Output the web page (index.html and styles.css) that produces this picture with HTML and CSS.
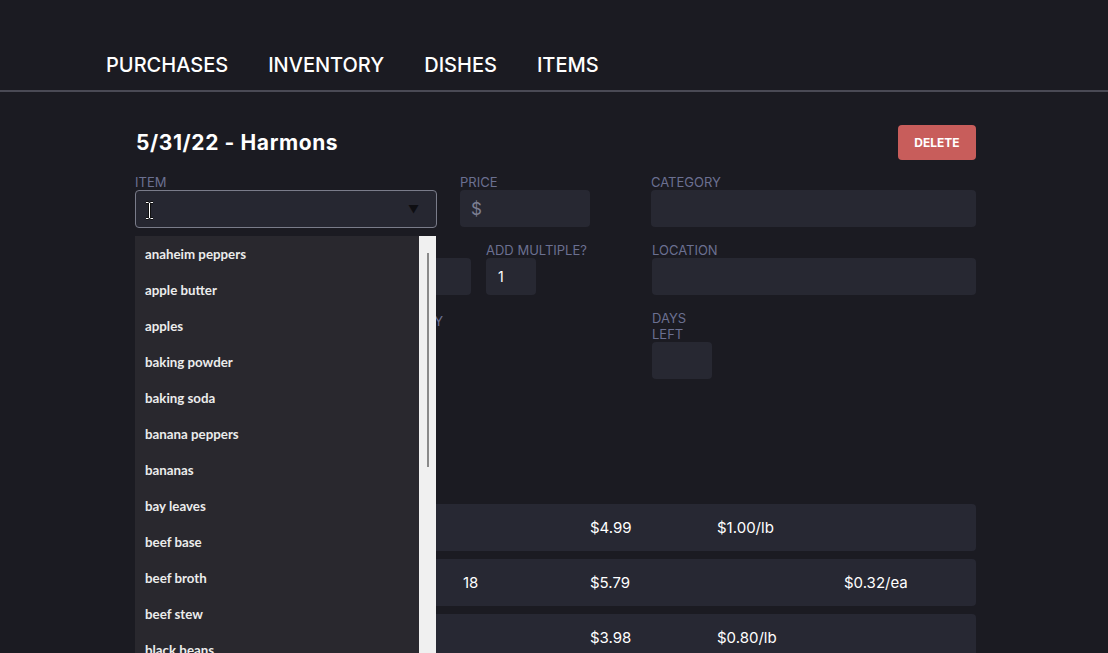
FILE: index.html
```html
<!DOCTYPE html>
<html>
<head>
<meta charset="utf-8">
<link rel="stylesheet" href="styles.css">
</head>
<body>
<nav class="nav">
  <a class="nav-link">PURCHASES</a>
  <a class="nav-link">INVENTORY</a>
  <a class="nav-link">DISHES</a>
  <a class="nav-link">ITEMS</a>
</nav>
<main class="main">
  <div class="header">
    <h1 class="title">5/31/22 - Harmons</h1>
    <button class="delete">DELETE</button>
  </div>
  <div class="form">
    <div class="row">
      <div class="field f-item">
        <label class="label">ITEM</label>
        <div class="select">
          <svg class="ibeam" width="9" height="19" viewBox="0 0 9 19">
            <path d="M1 1.5h2.5M5.5 1.5H8M4.5 2v15M1 17.5h2.5M5.5 17.5H8" stroke="#111" stroke-width="3" fill="none"/>
            <path d="M1 1.5h2.5M5.5 1.5H8M4.5 2v15M1 17.5h2.5M5.5 17.5H8" stroke="#fff" stroke-width="1" fill="none"/>
          </svg>
          <span class="arrow">▼</span>
        </div>
        <ul class="dropdown">
          <li>anaheim peppers</li>
          <li>apple butter</li>
          <li>apples</li>
          <li>baking powder</li>
          <li>baking soda</li>
          <li>banana peppers</li>
          <li>bananas</li>
          <li>bay leaves</li>
          <li>beef base</li>
          <li>beef broth</li>
          <li>beef stew</li>
          <li>black beans</li>
        </ul>
        <div class="scroll"><div class="thumb"></div></div>
      </div>
      <div class="field f-price">
        <label class="label">PRICE</label>
        <div class="input"><span class="dollar">$</span></div>
      </div>
      <div class="field f-wide">
        <label class="label">CATEGORY</label>
        <div class="input"></div>
      </div>
    </div>
    <div class="row">
      <div class="field f-amount">
        <label class="label">AMOUNT</label>
        <div class="input"></div>
      </div>
      <div class="field f-multi">
        <label class="label">ADD MULTIPLE?</label>
        <div class="input small"><span class="val">1</span></div>
      </div>
      <div class="field f-wide">
        <label class="label">LOCATION</label>
        <div class="input"></div>
      </div>
    </div>
    <div class="row row3">
      <div class="field f-qty">
        <label class="label">UNIT QUANTITY</label>
      </div>
      <div class="field f-days">
        <label class="label">DAYS LEFT</label>
        <div class="input"></div>
      </div>
    </div>
  </div>
  <div class="table">
    <div class="trow"><span>Bananas</span><span></span><span>$4.99</span><span>$1.00/lb</span><span></span></div>
    <div class="trow"><span>Eggs</span><span>18</span><span>$5.79</span><span></span><span>$0.32/ea</span></div>
    <div class="trow"><span>Apples</span><span></span><span>$3.98</span><span>$0.80/lb</span><span></span></div>
  </div>
</main>
</body>
</html>
```
FILE: styles.css
```css
* { box-sizing: border-box; }
html, body { margin: 0; padding: 0; }
body {
  background: #1b1b22;
  color: #ffffff;
  font-family: Inter, "Liberation Sans", sans-serif;
  width: 1108px;
  height: 653px;
  overflow: hidden;
}
.nav {
  display: flex;
  gap: 40px;
  padding: 52px 0 0 106px;
  height: 92px;
  border-bottom: 2px solid #4a4a55;
}
.nav-link {
  font-size: 20px;
  font-weight: 500;
  line-height: 26px;
  color: #ffffff;
}
.main {
  width: 840px;
  margin-left: 136px;
  padding-top: 33px;
}
.header {
  display: flex;
  justify-content: space-between;
  align-items: center;
}
.title {
  margin: 0;
  font-size: 21px;
  font-weight: 700;
  line-height: 28px;
  letter-spacing: 0.6px;
}
.delete {
  width: 78px;
  height: 35px;
  background: #c85d5b;
  color: #fff;
  border: none;
  border-radius: 4px;
  font-family: Inter, "Liberation Sans", sans-serif;
  font-weight: 700;
  font-size: 12px;
}
.form { margin-top: 14px; }
.row { display: flex; margin-bottom: 14px; }
.row3 { padding-top: 1px; }
.field { display: flex; flex-direction: column; position: relative; }
.label {
  font-size: 13px;
  line-height: 16px;
  color: #6b7091;
  height: 16px;
  white-space: nowrap;
}
.input {
  height: 37px;
  background: #272832;
  border-radius: 4px;
  display: flex;
  align-items: center;
}
.f-item { width: 302px; margin-right: 23px; margin-left: -1px; }
.select {
  height: 38px;
  background: #262731;
  border: 1px solid #7a7c8a;
  border-radius: 4px;
  position: relative;
  display: flex;
  align-items: center;
}
.ibeam { margin-left: 9px; margin-top: 2px; }
.arrow {
  position: absolute;
  right: 17px;
  top: 11px;
  font-size: 11px;
  color: #0e0e12;
}
.f-price { width: 130px; margin-right: 61px; }
.dollar { margin-left: 11px; color: #7c7f92; font-size: 17px; }
.f-wide { flex: 1; }
.f-amount { width: 335px; margin-right: 15px; }
.f-multi { width: 166px; }
.small { width: 50px; }
.val { margin-left: 12px; font-size: 14px; color: #fff; }
.f-qty { width: 516px; align-items: flex-end; padding-right: 209px; }
.f-qty .label { margin-top: 3px; }
.f-days { width: 60px; }
.f-days .label { white-space: normal; height: 32px; }

.dropdown {
  position: absolute;
  top: 62px;
  left: 0;
  width: 284px;
  height: 420px;
  margin: 0;
  padding: 0;
  list-style: none;
  background: #29282e;
  z-index: 5;
  font-family: Lato, "Open Sans", sans-serif;
  font-weight: 700;
  font-size: 13.3px;
  color: #ececec;
}
.dropdown li {
  height: 36px;
  line-height: 36px;
  padding-left: 10px;
}
.scroll {
  position: absolute;
  top: 62px;
  left: 284px;
  width: 17px;
  height: 420px;
  background: #f0f0f0;
  z-index: 5;
}
.thumb {
  position: absolute;
  left: 8px;
  top: 17px;
  width: 2px;
  height: 214px;
  background: #8a8a8a;
}
.table {
  margin-top: 125px;
  display: flex;
  flex-direction: column;
  gap: 8px;
}
.trow {
  height: 47px;
  background: #272833;
  border-radius: 4px;
  display: grid;
  grid-template-columns: 327px 127px 127px 127px 1fr;
  align-items: center;
  font-size: 15px;
}
.trow span:first-child { padding-left: 16px; }
```
